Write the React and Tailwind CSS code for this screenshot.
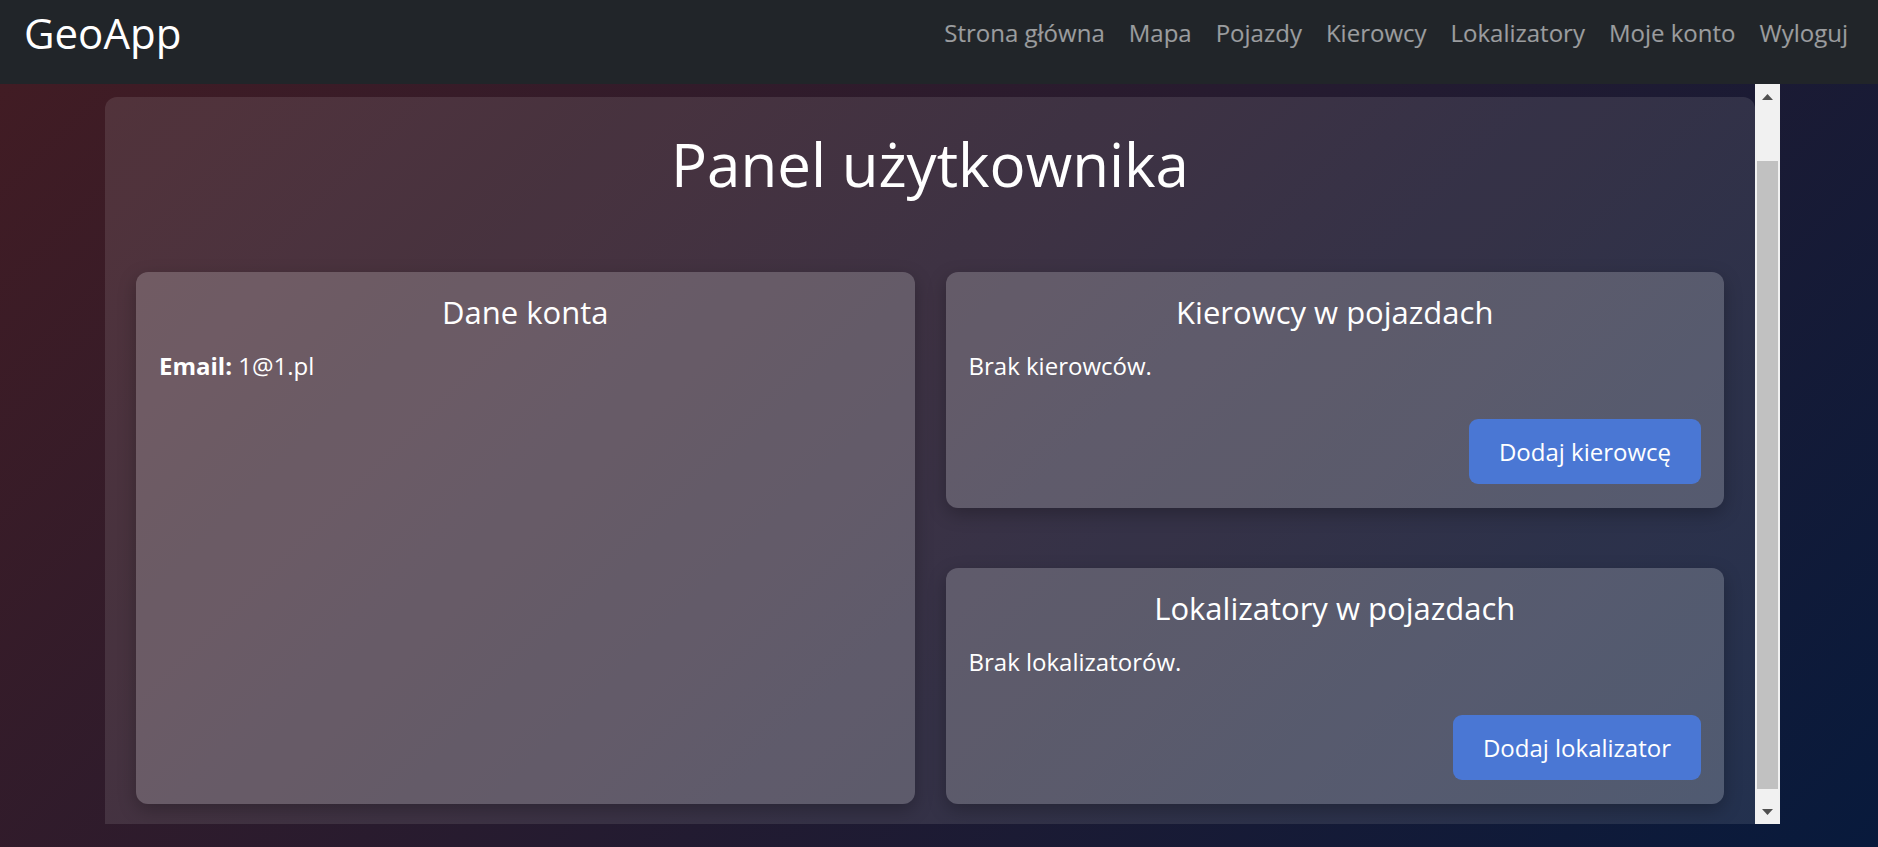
import { useLayoutEffect, useRef } from 'react';

const navLinks = ['Strona główna', 'Mapa', 'Pojazdy', 'Kierowcy', 'Lokalizatory', 'Moje konto', 'Wyloguj'];

const Card = ({ title, children, className = '' }) => (
    <div className={`bg-white/20 rounded-[12px] shadow-[0_6px_18px_rgba(0,0,0,0.25)] px-[23px] pt-[22px] pb-[24px] flex flex-col ${className}`}>
        <h5 className="text-[31px] leading-[36px] text-center mb-[18px]">{title}</h5>
        {children}
    </div>
);

const EmptyCard = ({ title, emptyText, buttonText }) => (
    <Card title={title}>
        <p className="text-[24px] leading-[36px]">{emptyText}</p>
        <div className="flex justify-end mt-[35px]">
            <button className="h-[65px] px-[30px] rounded-[9px] bg-[#4a77d4] text-[24px] leading-[36px] text-white">
                {buttonText}
            </button>
        </div>
    </Card>
);

// classic scrollbar, drawn since the headless browser hides the real one
const ScrollBar = () => (
    <div className="w-[25px] shrink-0 flex flex-col bg-[#f1f1f1]">
        <div className="h-[25px] flex items-center justify-center">
            <svg width="11" height="6" viewBox="0 0 11 6"><path d="M5.5 0 L11 6 L0 6 Z" fill="#505050" /></svg>
        </div>
        <div className="flex-1 pt-[52px] px-[2px]">
            <div className="h-[628px] bg-[#c1c1c1]"></div>
        </div>
        <div className="h-[25px] flex items-center justify-center">
            <svg width="11" height="6" viewBox="0 0 11 6"><path d="M0 0 L11 0 L5.5 6 Z" fill="#505050" /></svg>
        </div>
    </div>
);

const App = () => {
    const scrollRef = useRef(null);

    useLayoutEffect(() => {
        if (scrollRef.current) scrollRef.current.scrollTop = 61;
    }, []);

    return (
        <div className="min-h-screen bg-[linear-gradient(135deg,#431c23,#081a3c)] font-['Open_Sans',sans-serif] text-white">
            <nav className="h-[84px] bg-[#212529] flex items-start justify-between pl-[24px] pr-[18px]">
                <a href="#" className="mt-[8px] text-[42px] leading-[50px] text-white">GeoApp</a>
                <ul className="flex mt-[15px]">
                    {navLinks.map(link => (
                        <li key={link}>
                            <a href="#" className="block px-[12px] text-[24px] leading-[36px] text-white/55">{link}</a>
                        </li>
                    ))}
                </ul>
            </nav>

            <div className="ml-[105px] mr-[98px] h-[740px] flex">
                <div ref={scrollRef} className="flex-1 overflow-hidden">
                    <div className="mt-[74px] rounded-[12px] bg-white/10 px-[31px] pt-[31px] pb-[32px]">
                        <h1 className="text-[60px] leading-[72px] text-center mb-[72px]">Panel użytkownika</h1>

                        <div className="grid grid-cols-2 gap-x-[31px] gap-y-[60px]">
                            <Card title="Dane konta" className="row-span-2">
                                <p className="text-[24px] leading-[36px]">
                                    <strong className="font-bold">Email:</strong> 1@1.pl
                                </p>
                            </Card>
                            <EmptyCard title="Kierowcy w pojazdach" emptyText="Brak kierowców." buttonText="Dodaj kierowcę" />
                            <EmptyCard title="Lokalizatory w pojazdach" emptyText="Brak lokalizatorów." buttonText="Dodaj lokalizator" />
                        </div>
                    </div>
                </div>
                <ScrollBar />
            </div>
        </div>
    );
};

export default App;
